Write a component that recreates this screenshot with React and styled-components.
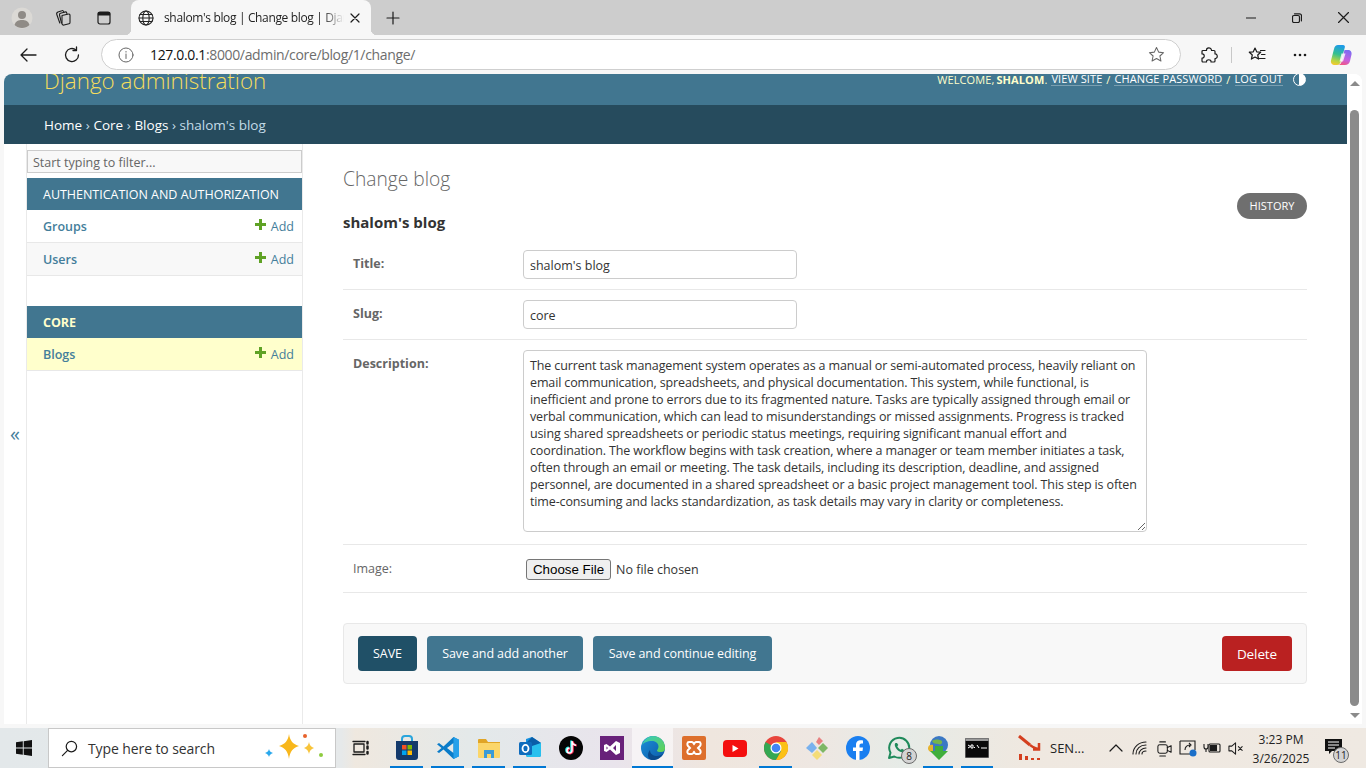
import React from 'react';
import styled, { createGlobalStyle } from 'styled-components';

const GlobalStyle = createGlobalStyle`
  html, body {
    margin: 0;
    padding: 0;
    height: 100%;
    overflow: hidden;
    background: #f7f7f7;
    font-family: "Open Sans", "Noto Sans", sans-serif;
  }
  * { box-sizing: border-box; }
`;

const Screen = styled.div`
  width: 1366px;
  height: 768px;
  display: flex;
  flex-direction: column;
  overflow: hidden;
  background: #f7f7f7;
`;

/* browser chrome */
const TabStrip = styled.div`
  height: 35px;
  flex: none;
  background: #cdcdcd;
  display: flex;
  align-items: center;
  color: #1c1c1c;
`;

const StripButton = styled.div`
  width: ${(p) => p.$w || 41}px;
  height: 35px;
  flex: none;
  display: flex;
  align-items: center;
  justify-content: center;
`;

const StripGap = styled.div`
  width: 6px;
  flex: none;
`;

const Tab = styled.div`
  position: relative;
  width: 240px;
  height: 35px;
  flex: none;
  background: #f7f7f7;
  border-radius: 8px 8px 0 0;
  display: flex;
  align-items: center;
  padding: 0 11px 0 7px;
  gap: 10px;

  &::before, &::after {
    content: '';
    position: absolute;
    bottom: 0;
    width: 6px;
    height: 6px;
  }
  &::before {
    left: -6px;
    background: radial-gradient(circle at 0 0, transparent 6px, #f7f7f7 6.5px);
  }
  &::after {
    right: -6px;
    background: radial-gradient(circle at 100% 0, transparent 6px, #f7f7f7 6.5px);
  }
`;

const TabTitle = styled.span`
  flex: 1;
  margin-right: -4px;
  overflow: hidden;
  white-space: nowrap;
  font-size: 12px;
  letter-spacing: -0.35px;
  color: #222;
  -webkit-mask-image: linear-gradient(to right, #000 88%, transparent 100%);
  mask-image: linear-gradient(to right, #000 88%, transparent 100%);
`;

const StripSpacer = styled.div`
  flex: 1;
`;

const AddressRow = styled.div`
  height: 39px;
  flex: none;
  background: #f7f7f7;
  display: flex;
  align-items: center;
  padding-left: 3px;
`;

const ToolButton = styled.div`
  width: ${(p) => p.$w || 44}px;
  height: 32px;
  flex: none;
  display: flex;
  align-items: center;
  justify-content: center;
`;

const AddressBar = styled.div`
  width: 1080px;
  height: 31px;
  margin: 0 6px 0 10px;
  flex: none;
  background: #fff;
  border: 1px solid #cfcfcf;
  border-radius: 16px;
  display: flex;
  align-items: center;
  padding: 0 15px 0 16px;
  gap: 16px;
  font-size: 14px;
  letter-spacing: -0.35px;
`;

const Url = styled.div`
  flex: 1;
  color: #6d6d6d;
  white-space: nowrap;
  b {
    font-weight: 400;
    color: #111;
  }
`;

const ToolbarSeparator = styled.div`
  width: 1px;
  height: 16px;
  flex: none;
  background: #c8c8c8;
`;

/* viewport and scrollbar */
const Viewport = styled.div`
  height: 650px;
  flex: none;
  margin: 0 4px 4px;
  display: flex;
  background: #fff;
  border-radius: 8px 8px 0 0;
  overflow: hidden;
`;

const Page = styled.div`
  width: 1343px;
  flex: none;
  display: flex;
  flex-direction: column;
  overflow: hidden;
  color: #333;
  font-size: 13px;
`;

const Scrollbar = styled.div`
  width: 15px;
  flex: none;
  display: flex;
  flex-direction: column;
  align-items: center;
  background: #fff;
`;

const ScrollArrow = styled.div`
  width: 0;
  height: 0;
  flex: none;
  margin-top: 7px;
  border-left: 5px solid transparent;
  border-right: 5px solid transparent;
  ${(p) => (p.$down ? 'border-top: 5px solid #8b8b8b;' : 'border-bottom: 5px solid #8b8b8b;')}
`;

const ScrollThumb = styled.div`
  width: 9px;
  height: 596px;
  margin-top: 24px;
  flex: none;
  background: #8b8b8b;
  border-radius: 5px;
`;

/* django header */
const Header = styled.header`
  height: 31px;
  flex: none;
  background: #417690;
  display: flex;
  justify-content: space-between;
  padding: 0 41px 0 40px;
  overflow: hidden;
`;

const Branding = styled.div`
  margin-top: -9px;
  font-size: 22.4px;
  line-height: 32px;
  font-weight: 300;
  color: #f5dd5d;
`;

const UserTools = styled.div`
  margin-top: -3px;
  height: 16px;
  display: flex;
  align-items: center;
  gap: 4px;
  font-size: 11px;
  letter-spacing: 0.1px;
  text-transform: uppercase;
  color: #ffc;
  white-space: nowrap;

  b {
    font-weight: 700;
    margin-left: -1px;
  }
`;

const UserLink = styled.a`
  color: #fff;
  border-bottom: 1px solid rgba(255, 255, 255, 0.3);
  line-height: 13px;
`;

const ThemeToggle = styled.span`
  width: 13px;
  height: 13px;
  margin-left: 6px;
  flex: none;
  border-radius: 50%;
  border: 1.5px solid #fff;
  background: linear-gradient(to right, transparent 50%, #fff 50%);
`;

const Breadcrumbs = styled.div`
  height: 39px;
  flex: none;
  background: #264b5d;
  padding-left: 40px;
  display: flex;
  align-items: center;
  gap: 3.6px;
  font-size: 13.5px;
  color: #c4dce8;

  a {
    color: #fff;
  }
`;

const Body = styled.div`
  flex: 1;
  display: flex;
  min-height: 0;
`;

const NavToggle = styled.div`
  width: 23px;
  flex: none;
  border-right: 1px solid #eaeaea;
  display: flex;
  align-items: center;
  justify-content: center;
  padding-bottom: 2px;
  font-size: 20px;
  color: #447e9b;
`;

const Sidebar = styled.nav`
  width: 276px;
  flex: none;
  border-right: 1px solid #eaeaea;
  padding-top: 6px;
`;

const FilterInput = styled.input`
  display: block;
  width: 275px;
  height: 23px;
  padding: 3px 5px 2px;
  margin-bottom: 5px;
  background: #f8f8f8;
  border: 1px solid #ccc;
  font-family: inherit;
  font-size: 12.5px;
  outline: none;

  &::placeholder {
    color: #666;
    opacity: 1;
  }
`;

const AppModule = styled.div`
  margin-bottom: 30px;
`;

const Caption = styled.div`
  height: 32px;
  background: #417690;
  color: ${(p) => (p.$current ? '#ffc' : '#fff')};
  font-weight: ${(p) => (p.$current ? 700 : 400)};
  font-size: 12.5px;
  letter-spacing: -0.02px;
  padding-left: 16px;
  display: flex;
  align-items: center;
`;

const ModelRow = styled.div`
  height: 33px;
  background: ${(p) => p.$bg || '#fff'};
  border-bottom: 1px solid #e8e8e8;
  display: flex;
  align-items: center;
  justify-content: space-between;
  padding: 0 8px 0 16px;
  font-size: 12.5px;
  color: #447e9b;
`;

const ModelName = styled.a`
  font-weight: 600;
`;

const AddLink = styled.a`
  display: flex;
  align-items: center;
  gap: 5px;
`;

const PlusIcon = styled.span`
  width: 11px;
  height: 11px;
  margin-top: -4px;
  flex: none;
  background:
    linear-gradient(#5fa225, #5fa225) center / 11px 3px no-repeat,
    linear-gradient(#5fa225, #5fa225) center / 3px 11px no-repeat;
`;

const Content = styled.main`
  flex: 1;
  padding: 20px 40px 0;
  min-width: 0;
`;

const PageTitle = styled.h1`
  margin: 0;
  font-size: 19.2px;
  line-height: 30px;
  font-weight: 300;
  color: #666;
`;

const ToolsRow = styled.div`
  display: flex;
  justify-content: flex-end;
  margin-top: -1px;
  height: 26px;
`;

const HistoryLink = styled.a`
  width: 70px;
  height: 26px;
  padding-bottom: 1px;
  border-radius: 13px;
  background: #6f6f6f;
  color: #fff;
  font-size: 11px;
  text-transform: uppercase;
  display: flex;
  align-items: center;
  justify-content: center;
`;

const ObjectName = styled.h2`
  margin: -7px 0 8px;
  font-size: 15px;
  line-height: 20px;
  font-weight: 700;
  color: #333;
`;

const FormRow = styled.div`
  display: flex;
  padding: ${(p) => p.$pt || 10}px 10px ${(p) => p.$pb || 10}px;
  border-bottom: 1px solid #e8e8e8;
`;

const Label = styled.label`
  width: 170px;
  flex: none;
  font-size: 12.5px;
  line-height: 17px;
  color: #666;
  font-weight: ${(p) => (p.$plain ? 400 : 700)};
  padding-top: ${(p) => p.$top || 0}px;
`;

const TextInput = styled.input`
  width: 274px;
  height: 29px;
  padding: 4px 6px 2px;
  background: #fff;
  border: 1px solid #ccc;
  border-radius: 4px;
  font-family: inherit;
  font-size: 12.5px;
  color: #333;
  outline: none;
`;

const DescriptionArea = styled.textarea`
  display: block;
  width: 624px;
  height: 182px;
  padding: 6px;
  background: #fff;
  border: 1px solid #ccc;
  border-radius: 4px;
  font-family: inherit;
  font-size: 12.5px;
  line-height: 17px;
  letter-spacing: -0.13px;
  color: #333;
  white-space: pre;
  overflow: hidden;
  outline: none;
`;

const FileField = styled.div`
  display: flex;
  align-items: center;
  gap: 5px;
  margin-left: 3px;
  font-size: 12.5px;
  color: #333;
`;

const FileButton = styled.button`
  width: 85px;
  height: 21px;
  padding: 0;
  background: #efefef;
  border: 1px solid #767676;
  border-radius: 3px;
  font-family: "Liberation Sans", sans-serif;
  font-size: 13.33px;
  color: #000;
`;

const SubmitRow = styled.div`
  margin-top: 30px;
  height: 61px;
  background: #f8f8f8;
  border: 1px solid #e8e8e8;
  border-radius: 4px;
  display: flex;
  align-items: center;
  gap: 10px;
  padding: 0 14px;
`;

const ActionButton = styled.button`
  height: 35px;
  width: ${(p) => p.$w}px;
  padding: 0;
  flex: none;
  border: none;
  border-radius: 4px;
  background: ${(p) => p.$bg || '#417690'};
  color: #fff;
  font-family: inherit;
  font-size: ${(p) => p.$size || 12.5}px;
  letter-spacing: -0.1px;
  ${(p) => p.$right && 'margin-left: auto;'}
`;

/* windows taskbar */
const Taskbar = styled.div`
  height: 40px;
  flex: none;
  display: flex;
  align-items: stretch;
  background: linear-gradient(
    to right,
    #e3e8ea 0,
    #e6e9ea 25%,
    #efe8df 26%,
    #e3e9ea 35%,
    #e9e4ec 45%,
    #efe6de 52%,
    #eee7e2 60%,
    #e6ebe7 66%,
    #efe8e0 75%,
    #efe9e2 100%
  );
`;

const StartButton = styled.div`
  width: 48px;
  flex: none;
  display: flex;
  align-items: center;
  justify-content: center;
`;

const SearchBox = styled.div`
  width: 288px;
  flex: none;
  background: #fff;
  border: 1px solid #c8c8c8;
  display: flex;
  align-items: center;
  padding: 0 10px 0 12px;
  gap: 10px;
  font-size: 14px;
  letter-spacing: -0.1px;
  color: #333;
`;

const SearchText = styled.span`
  flex: 1;
  white-space: nowrap;
`;

const TaskView = styled.div`
  width: 50px;
  flex: none;
  display: flex;
  align-items: center;
  justify-content: center;
`;

const TaskSlot = styled.div`
  position: relative;
  width: ${(p) => p.$w || 41}px;
  flex: none;
  display: flex;
  align-items: center;
  justify-content: center;
  background: ${(p) => (p.$active ? 'rgba(255,255,255,.55)' : 'transparent')};

  &::after {
    content: '';
    display: ${(p) => (p.$open ? 'block' : 'none')};
    position: absolute;
    bottom: 0;
    left: ${(p) => (p.$active ? 0 : 4)}px;
    right: ${(p) => (p.$active ? 0 : 4)}px;
    height: 2px;
    background: #0078d4;
  }
`;

const CountBadge = styled.span`
  position: absolute;
  right: ${(p) => p.$r}px;
  bottom: ${(p) => p.$b}px;
  width: 16px;
  height: 16px;
  border-radius: 50%;
  background: #d4d4d4;
  border: 1px solid #6a6a6a;
  color: #222;
  font-size: 10px;
  line-height: 14px;
  text-align: center;
`;

const TaskLabelApp = styled.div`
  width: 76px;
  flex: none;
  margin-left: 21px;
  display: flex;
  align-items: center;
  gap: 8px;
  font-size: 13px;
  color: #222;
`;

const Tray = styled.div`
  flex: 1;
  display: flex;
  align-items: center;
  justify-content: flex-end;
  padding-right: 16px;
`;

const TrayIcon = styled.div`
  width: ${(p) => p.$w || 24}px;
  height: 40px;
  flex: none;
  display: flex;
  align-items: center;
  justify-content: center;
`;

const Clock = styled.div`
  width: 70px;
  flex: none;
  margin-left: -2px;
  padding-top: 2px;
  font-size: 12px;
  line-height: 19px;
  text-align: center;
  color: #222;
`;

const Notice = styled.div`
  position: relative;
  width: 34px;
  height: 40px;
  padding-bottom: 4px;
  flex: none;
  display: flex;
  align-items: center;
  justify-content: center;
`;

/* drawings */
const Stroke = ({ size = 16, w = 16, h, children, sw = 1.2, color = '#1c1c1c' }) => (
  <svg width={size} height={h || size} viewBox={`0 0 ${w} ${h || w}`} fill="none" stroke={color} strokeWidth={sw} strokeLinecap="round" strokeLinejoin="round">
    {children}
  </svg>
);

const Avatar = () => (
  <svg width="22" height="22" viewBox="0 0 22 22">
    <circle cx="11" cy="11" r="10.5" fill="#dbd9d5" />
    <circle cx="11" cy="8" r="4" fill="#8f8b86" />
    <path d="M3.500 18c1-4 4-5 7.500-5s6.500 1 7.500 5c-2 2-4.500 3-7.500 3s-5.500-1-7.500-3z" fill="#8f8b86" />
  </svg>
);

const CollectionsGlyph = () => (
  <Stroke size={17} w={17} sw={1.1}>
    <path d="M7 6.500l6.500-1.500a1.200 1.200 0 0 1 1.500 1.200v7.300a1.300 1.300 0 0 1-1 1.300l-5 1.200a1.500 1.500 0 0 1-2-1.400z" />
    <path d="M12 4.800l-.3-1a1.300 1.300 0 0 0-1.600-.8L5.500 4.300A1.500 1.500 0 0 0 4.500 6l2 8" />
    <path d="M9 3.300l-.4-.9a1.300 1.300 0 0 0-1.700-.7L3 3A2 2 0 0 0 1.800 5.500l3 8.500" />
  </Stroke>
);

const GlobeGlyph = () => (
  <Stroke size={16} w={16} color="#222" sw={1.1}>
    <circle cx="8" cy="8" r="7" />
    <ellipse cx="8" cy="8" rx="3.200" ry="7" />
    <path d="M1 8h14M2 4.500h12M2 11.500h12" />
  </Stroke>
);

const CopilotLogo = () => (
  <svg width="22" height="22" viewBox="0 0 22 22">
    <defs>
      <linearGradient id="cpA" x1="0.5" y1="0" x2="0.3" y2="1">
        <stop offset="0" stopColor="#1d9be8" />
        <stop offset="0.45" stopColor="#35c08f" />
        <stop offset="0.8" stopColor="#b9d542" />
        <stop offset="1" stopColor="#f6c92f" />
      </linearGradient>
      <linearGradient id="cpB" x1="0.6" y1="0" x2="0.3" y2="1">
        <stop offset="0" stopColor="#7b6cf2" />
        <stop offset="0.6" stopColor="#c560e0" />
        <stop offset="1" stopColor="#f2577f" />
      </linearGradient>
    </defs>
    <path d="M8 1h5c1.500 0 2.200 1 1.800 2.500L11 17c-.6 2.200-1.800 4-4 4H5C2 21 .5 19 1 16.500L4 5c.5-2.500 2-4 4-4z" fill="url(#cpA)" />
    <path d="M14.500 6h3.500C20.500 6 22 8 21.500 10.500L20 17c-.6 2.500-2.500 4-5 4H8c2 0 3-1.500 3.600-3.500z" fill="url(#cpB)" />
    <path d="M11.500 9.500h4l-2.500 8h-3.500z" fill="#fff" opacity=".8" />
  </svg>
);

const WindowsLogo = () => (
  <svg width="16" height="16" viewBox="0 0 16 16" fill="#111">
    <path d="M0 2.300 6.800 1.300V7.500H0zM7.700 1.200 16 0V7.500H7.700zM0 8.500H6.800V14.700L0 13.700zM7.700 8.500H16V16L7.700 14.800z" />
  </svg>
);

const Sparkles = () => (
  <svg width="62" height="30" viewBox="0 0 62 30">
    <path d="M26 1c1 7 4 10 10 12-6 2-9 5-10 13-1-8-4-11-10-13 6-2 9-5 10-12z" fill="#f8b71c" />
    <path d="M46 9c.500 3 2 5 5 6-3 1-4.500 3-5 6-.500-3-2-5-5-6 3-1 4.500-3 5-6z" fill="#f8c43a" />
    <path d="M6 16c.400 2 1.500 3 4 4-2.500 1-3.600 2-4 4-.400-2-1.500-3-4-4 2.500-1 3.600-2 4-4z" fill="#2aa8ec" />
    <circle cx="42" cy="3" r="2" fill="#e8622c" />
    <circle cx="58" cy="22" r="2" fill="#8ecb3f" />
  </svg>
);

const StoreIcon = () => (
  <svg width="24" height="26" viewBox="0 0 24 26">
    <path d="M7 7V4a3 3 0 0 1 3-3h4a3 3 0 0 1 3 3v3" fill="none" stroke="#2aa5dc" strokeWidth="2" />
    <path d="M1 6h22v16a3 3 0 0 1-3 3H4a3 3 0 0 1-3-3z" fill="#143a6b" />
    <rect x="7" y="10" width="4.500" height="4.500" fill="#f25022" />
    <rect x="12.500" y="10" width="4.500" height="4.500" fill="#7fba00" />
    <rect x="7" y="15.500" width="4.500" height="4.500" fill="#00a4ef" />
    <rect x="12.500" y="15.500" width="4.500" height="4.500" fill="#ffb900" />
  </svg>
);

const VsCodeIcon = () => (
  <svg width="24" height="24" viewBox="0 0 24 24">
    <path d="M17.500 1 23 3.700v16.600L17.500 23 7.500 13.500 3 17 1 15.800 5.500 12 1 8.200 3 7l4.500 3.500z" fill="#0a7cc9" />
    <path d="M17.500 7 11 12l6.500 5z" fill="#e3e9ea" />
    <path d="M17.500 1 23 3.700v16.600L17.500 23z" fill="#25a0ea" />
  </svg>
);

const FolderIcon = () => (
  <svg width="24" height="22" viewBox="0 0 24 22">
    <path d="M1 3a1 1 0 0 1 1-1h7l2 3h12v4H1z" fill="#e0a526" />
    <path d="M1 6h22v14a1 1 0 0 1-1 1H2a1 1 0 0 1-1-1z" fill="#fbd66a" />
    <path d="M7 13h10v8h-3v-4h-4v4H7z" fill="#3a9bd8" />
  </svg>
);

const OutlookIcon = () => (
  <svg width="24" height="24" viewBox="0 0 24 24">
    <path d="M8 3l6-2 9 6v12a2 2 0 0 1-2 2H10a2 2 0 0 1-2-2z" fill="#1490df" />
    <path d="M14 1l9 6-9 5-6-5z" fill="#0a5ea8" />
    <path d="M8 12l15-5v12a2 2 0 0 1-2 2H10a2 2 0 0 1-2-2z" fill="#28c0ee" />
    <rect x="1" y="6" width="13" height="13" rx="1.500" fill="#0f6cbd" />
    <ellipse cx="7.500" cy="12.500" rx="3" ry="3.600" fill="none" stroke="#fff" strokeWidth="1.800" />
  </svg>
);

const TikTokIcon = () => (
  <svg width="24" height="24" viewBox="0 0 24 24">
    <circle cx="12" cy="12" r="12" fill="#050505" />
    <path d="M13 5v9.500a2.500 2.500 0 1 1-2.500-2.500M13 5c.3 2.500 2 4 4 4.200" fill="none" stroke="#25f4ee" strokeWidth="2" transform="translate(-.8 -.4)" />
    <path d="M13 5v9.500a2.500 2.500 0 1 1-2.500-2.500M13 5c.3 2.500 2 4 4 4.200" fill="none" stroke="#fe2c55" strokeWidth="2" transform="translate(.8 .4)" />
    <path d="M13 5v9.500a2.500 2.500 0 1 1-2.500-2.500M13 5c.3 2.500 2 4 4 4.200" fill="none" stroke="#fff" strokeWidth="1.500" />
  </svg>
);

const VisualStudioIcon = () => (
  <svg width="24" height="24" viewBox="0 0 24 24">
    <rect width="24" height="24" fill="#68217a" />
    <path d="M16 5l4 2v10l-4 2-6-5.500L6.500 16 4 15V9l2.500-1L10 10.500zM16 9l-3 3 3 3zM6.500 10.500v3L8 12z" fill="#fff" fillRule="evenodd" />
  </svg>
);

const EdgeIcon = () => (
  <svg width="24" height="24" viewBox="0 0 24 24">
    <defs>
      <linearGradient id="edA" x1="0" y1="0" x2="1" y2="1">
        <stop offset="0" stopColor="#37c9c0" />
        <stop offset="1" stopColor="#62d24e" />
      </linearGradient>
      <linearGradient id="edB" x1="0" y1="0" x2="1" y2="1">
        <stop offset="0" stopColor="#1c8fd8" />
        <stop offset="1" stopColor="#0c5aa8" />
      </linearGradient>
    </defs>
    <circle cx="12" cy="12" r="12" fill="url(#edB)" />
    <path d="M1 9C3 3.500 7 0 12 0c7 0 12 5 12 12 0 2-1 4-4 4-2.500 0-4-.5-4-1.500 0-.7 1.500-1.500 1.500-4C17.500 7.500 15 5 11 5 6 5 2.500 7 1 9z" fill="url(#edA)" />
    <path d="M9 14c0 4 3.500 6 7 6 2.500 0 4.500-1 6-2.500-2 4-6 6.500-10 6.500-3 0-5-2-5-5 0-2 1-4 2-5z" fill="#0a4a8c" />
  </svg>
);

const XamppIcon = () => (
  <svg width="24" height="24" viewBox="0 0 24 24">
    <rect width="24" height="24" rx="2" fill="#dd6f2c" />
    <path d="M7 6h3c1 0 1.500 1.500 2 2 .5-.5 1-2 2-2h3c2 0 2 3 1 4l-2 2 2 2c1 1 1 4-1 4h-3c-1 0-1.500-1.500-2-2-.5.5-1 2-2 2H7c-2 0-2-3-1-4l2-2-2-2C5 9 5 6 7 6z" fill="none" stroke="#fff" strokeWidth="2" />
  </svg>
);

const YouTubeIcon = () => (
  <svg width="24" height="17" viewBox="0 0 24 17">
    <rect width="24" height="17" rx="4" fill="#f40f0f" />
    <path d="M9.500 5v7l6-3.500z" fill="#fff" />
  </svg>
);

const ChromeIcon = () => (
  <svg width="24" height="24" viewBox="0 0 24 24">
    <circle cx="12" cy="12" r="12" fill="#e8453c" />
    <path d="M12 12 1.600 6A12 12 0 0 0 12 24l5.200-9z" fill="#34a853" />
    <path d="M12 6h10.400A12 12 0 0 1 12 24l5.200-9z" fill="#fbc116" />
    <circle cx="12" cy="12" r="5.500" fill="#fff" />
    <circle cx="12" cy="12" r="4.300" fill="#4285f4" />
  </svg>
);

const GitAppIcon = () => (
  <svg width="24" height="24" viewBox="0 0 24 24">
    <path d="M7 6l5 6-5 5-6-5z" fill="#79b1ee" />
    <path d="M14 1l4 4-4 4-3-3z" fill="#e88080" />
    <path d="M18 7l5 5-5 5-5-5z" fill="#7db765" />
    <path d="M12 14l5 5-5 5-5-5z" fill="#f4dc78" />
  </svg>
);

const FacebookIcon = () => (
  <svg width="24" height="24" viewBox="0 0 24 24">
    <circle cx="12" cy="12" r="12" fill="#1a7ff0" />
    <path d="M13.500 24v-9h3l.5-3.500h-3.500V9.500c0-1 .5-2 2-2H17V4.500c-3.500-.7-7 0-7 4.500v2.500H7V15h3v9z" fill="#fff" />
  </svg>
);

const WhatsAppIcon = () => (
  <svg width="24" height="24" viewBox="0 0 24 24">
    <path d="M2 22l1.500-5.300A10 10 0 1 1 7.300 20.500z" fill="none" stroke="#1f8a5b" strokeWidth="2" strokeLinejoin="round" />
    <path d="M8.500 7c-1 .8-1 2.500 0 4.300 1.200 2.200 3.500 4.500 6 5 1.500.2 2.800-.6 3-2l-2.500-1.500-1.200 1c-1.500-.6-3-2.200-3.500-3.500l1-1.200L10 7z" fill="#1f8a5b" />
  </svg>
);

const IdmIcon = () => (
  <svg width="24" height="24" viewBox="0 0 24 24">
    <circle cx="13" cy="9" r="9" fill="#3b78c4" />
    <path d="M6 5c3-2 7-2 10 0 1 3-2 4-4 3S8 9 6 5z" fill="#75b54a" />
    <path d="M2 12c0-3 3-4 5-3v7C4 16 2 15 2 12z" fill="#e6b32e" />
    <path d="M9 10h8v5h5l-9 9-9-9h5z" fill="#3fae3c" />
  </svg>
);

const CmdIcon = () => (
  <svg width="24" height="20" viewBox="0 0 24 20">
    <rect width="24" height="20" fill="#0a0a0a" stroke="#9a9a9a" strokeWidth="1" />
    <rect x=".5" y=".5" width="23" height="2.500" fill="#9a9a9a" />
    <path d="M3 7l2.500 1.500L3 10M6 7h2v3H6zM9 9.500h1M12 7l2 3M16 10h6" stroke="#fff" strokeWidth="1" fill="none" />
  </svg>
);

const SenIcon = () => (
  <svg width="24" height="26" viewBox="0 0 24 26" fill="#d43f1f">
    <rect x="1" y="19" width="3" height="6" />
    <rect x="7" y="21" width="3" height="4" />
    <rect x="13" y="23" width="3" height="2" />
    <rect x="19" y="23" width="3" height="2" />
    <path d="M1 1l11 9" stroke="#d43f1f" strokeWidth="3" fill="none" />
    <path d="M12 10c4 3 6 4 9 4M21 8v6.500h-6" stroke="#d43f1f" strokeWidth="2.500" fill="none" />
  </svg>
);

const LINES = [
  'The current task management system operates as a manual or semi-automated process, heavily reliant on',
  'email communication, spreadsheets, and physical documentation. This system, while functional, is',
  'inefficient and prone to errors due to its fragmented nature. Tasks are typically assigned through email or',
  'verbal communication, which can lead to misunderstandings or missed assignments. Progress is tracked',
  'using shared spreadsheets or periodic status meetings, requiring significant manual effort and',
  'coordination. The workflow begins with task creation, where a manager or team member initiates a task,',
  'often through an email or meeting. The task details, including its description, deadline, and assigned',
  'personnel, are documented in a shared spreadsheet or a basic project management tool. This step is often',
  'time-consuming and lacks standardization, as task details may vary in clarity or completeness.',
];

const TASK_APPS = [
  { key: 'store', icon: <StoreIcon />, open: true },
  { key: 'code', icon: <VsCodeIcon />, open: true },
  { key: 'folder', icon: <FolderIcon />, open: true },
  { key: 'outlook', icon: <OutlookIcon />, open: true },
  { key: 'tiktok', icon: <TikTokIcon /> },
  { key: 'vs', icon: <VisualStudioIcon /> },
  { key: 'edge', icon: <EdgeIcon />, open: true, active: true },
  { key: 'xampp', icon: <XamppIcon /> },
  { key: 'youtube', icon: <YouTubeIcon /> },
  { key: 'chrome', icon: <ChromeIcon />, open: true },
  { key: 'git', icon: <GitAppIcon /> },
  { key: 'facebook', icon: <FacebookIcon /> },
  { key: 'whatsapp', icon: <WhatsAppIcon />, badge: '8' },
  { key: 'idm', icon: <IdmIcon />, open: true, w: 38 },
  { key: 'cmd', icon: <CmdIcon />, open: true, w: 40 },
];

const App = () => {
  return (
    <Screen>
      <GlobalStyle />
      <TabStrip>
        <StripButton $w={44}><Avatar /></StripButton>
        <StripButton $w={38}><CollectionsGlyph /></StripButton>
        <StripButton $w={43}>
          <Stroke size={16} w={16}>
            <rect x="2" y="2" width="12" height="12" rx="2" />
            <path d="M2.500 2.500h11v2.500h-11z" fill="#1c1c1c" />
          </Stroke>
        </StripButton>
        <StripGap />
        <Tab>
          <GlobeGlyph />
          <TabTitle>shalom's blog | Change blog | Django site admin</TabTitle>
          <Stroke size={10} w={10}><path d="M1 1l8 8M9 1l-8 8" /></Stroke>
        </Tab>
        <StripButton $w={44}>
          <Stroke size={14} w={14}><path d="M7 1v12M1 7h12" /></Stroke>
        </StripButton>
        <StripSpacer />
        <StripButton $w={46}><Stroke size={10} w={10}><path d="M0 5h10" /></Stroke></StripButton>
        <StripButton $w={46}>
          <Stroke size={10} w={10}>
            <rect x=".5" y="2.500" width="7" height="7" rx="1.500" />
            <path d="M2.500 .8h5a2 2 0 0 1 2 2v5" />
          </Stroke>
        </StripButton>
        <StripButton $w={46}><Stroke size={11} w={11}><path d="M.5.5l10 10M10.500.5l-10 10" /></Stroke></StripButton>
      </TabStrip>

      <AddressRow>
        <ToolButton $w={50}>
          <Stroke size={18} w={18} sw={1.3}><path d="M17 9H2M8 3L2 9l6 6" /></Stroke>
        </ToolButton>
        <ToolButton $w={38}>
          <Stroke size={18} w={18} sw={1.3}>
            <path d="M15.500 9A6.500 6.500 0 1 1 13 3.900" />
            <path d="M13.500 1v3.500H10" />
          </Stroke>
        </ToolButton>
        <AddressBar>
          <Stroke size={16} w={16} color="#666" sw={1}>
            <circle cx="8" cy="8" r="7" />
            <path d="M8 7v4.500M8 4.500v.6" />
          </Stroke>
          <Url><b>127.0.0.1</b>:8000/admin/core/blog/1/change/</Url>
          <Stroke size={17} w={18} color="#666" sw={1.1}>
            <path d="M9 1.500l2.300 5 5.200.6-3.900 3.500 1.100 5.300L9 13.200l-4.700 2.700 1.100-5.300L1.500 7.100l5.200-.6z" />
          </Stroke>
        </AddressBar>
        <ToolButton $w={44}>
          <Stroke size={18} w={18} sw={1.2}>
            <path d="M6.500 4C6.500 1.500 11 1 11.500 4v.5H14a1 1 0 0 1 1 1V8c3-.5 3 5 0 4.500V15a1 1 0 0 1-1 1h-3c.5-3-5-3-4.500 0H3a1 1 0 0 1-1-1v-3c3 .5 3-4.500 0-4V5.500a1 1 0 0 1 1-1h3.500z" />
          </Stroke>
        </ToolButton>
        <ToolbarSeparator />
        <ToolButton $w={49}>
          <Stroke size={18} w={18} sw={1.2}>
            <path d="M7 2l1.700 3.800 4 .4-3 2.800.9 4.100L7 11l-3.600 2.100.9-4.100-3-2.800 4-.4zM12.500 4.500H17M13.500 8.500H17M11.500 12.500H17" />
          </Stroke>
        </ToolButton>
        <ToolButton $w={37}>
          <svg width="14" height="4" viewBox="0 0 14 4" fill="#1c1c1c">
            <circle cx="2" cy="2" r="1.300" /><circle cx="7" cy="2" r="1.300" /><circle cx="12" cy="2" r="1.300" />
          </svg>
        </ToolButton>
        <ToolButton $w={46}><CopilotLogo /></ToolButton>
      </AddressRow>

      <Viewport>
        <Page>
          <Header>
            <Branding>Django administration</Branding>
            <UserTools>
              <span>Welcome, <b>shalom</b>.</span>
              <UserLink>View site</UserLink> /
              <UserLink>Change password</UserLink> /
              <UserLink>Log out</UserLink>
              <ThemeToggle />
            </UserTools>
          </Header>
          <Breadcrumbs>
            <a>Home</a> › <a>Core</a> › <a>Blogs</a> › shalom's blog
          </Breadcrumbs>
          <Body>
            <NavToggle>«</NavToggle>
            <Sidebar>
              <FilterInput placeholder="Start typing to filter..." />
              <AppModule>
                <Caption>AUTHENTICATION AND AUTHORIZATION</Caption>
                <ModelRow>
                  <ModelName>Groups</ModelName>
                  <AddLink><PlusIcon />Add</AddLink>
                </ModelRow>
                <ModelRow $bg="#f8f8f8">
                  <ModelName>Users</ModelName>
                  <AddLink><PlusIcon />Add</AddLink>
                </ModelRow>
              </AppModule>
              <AppModule>
                <Caption $current>CORE</Caption>
                <ModelRow $bg="#ffc">
                  <ModelName>Blogs</ModelName>
                  <AddLink><PlusIcon />Add</AddLink>
                </ModelRow>
              </AppModule>
            </Sidebar>
            <Content>
              <PageTitle>Change blog</PageTitle>
              <ToolsRow><HistoryLink>History</HistoryLink></ToolsRow>
              <ObjectName>shalom's blog</ObjectName>
              <FormRow>
                <Label $top={5}>Title:</Label>
                <TextInput defaultValue="shalom's blog" />
              </FormRow>
              <FormRow>
                <Label $top={5}>Slug:</Label>
                <TextInput defaultValue="core" />
              </FormRow>
              <FormRow $pb={12}>
                <Label $top={5}>Description:</Label>
                <DescriptionArea defaultValue={LINES.join('\n')} />
              </FormRow>
              <FormRow $pt={14} $pb={12}>
                <Label $plain $top={1}>Image:</Label>
                <FileField>
                  <FileButton>Choose File</FileButton>
                  No file chosen
                </FileField>
              </FormRow>
              <SubmitRow>
                <ActionButton $w={59} $bg="#205067">SAVE</ActionButton>
                <ActionButton $w={156}>Save and add another</ActionButton>
                <ActionButton $w={179}>Save and continue editing</ActionButton>
                <ActionButton $w={70} $bg="#ba2121" $size={13.5} $right>Delete</ActionButton>
              </SubmitRow>
            </Content>
          </Body>
        </Page>
        <Scrollbar>
          <ScrollArrow />
          <ScrollThumb />
          <ScrollArrow $down />
        </Scrollbar>
      </Viewport>

      <Taskbar>
        <StartButton><WindowsLogo /></StartButton>
        <SearchBox>
          <Stroke size={17} w={18} sw={1.3}>
            <circle cx="11" cy="7" r="5.500" />
            <path d="M7 11l-5.500 5.500" />
          </Stroke>
          <SearchText>Type here to search</SearchText>
          <Sparkles />
        </SearchBox>
        <TaskView>
          <Stroke size={18} w={18} sw={1.3}>
            <rect x="2" y="5" width="10" height="8" />
            <path d="M1 2.500h12M1 15.500h12" />
            <path d="M15.500 3v1.500M15.500 7.500v2M15.500 13v1.500" strokeWidth="2.500" />
          </Stroke>
        </TaskView>
        {TASK_APPS.map((app) => (
          <TaskSlot key={app.key} $w={app.w} $open={app.open} $active={app.active}>
            {app.icon}
            {app.badge && <CountBadge $r={2} $b={4}>{app.badge}</CountBadge>}
          </TaskSlot>
        ))}
        <TaskLabelApp>
          <SenIcon />
          SEN...
        </TaskLabelApp>
        <Tray>
          <TrayIcon>
            <Stroke size={14} w={14} sw={1.2}><path d="M1 10l6-6 6 6" /></Stroke>
          </TrayIcon>
          <TrayIcon>
            <Stroke size={16} w={16} sw={1.1}>
              <path d="M1 14C1 7 7 2 14 2M4 14c0-5 4-9 10-9M7 14c0-3 3-6 7-6M10 14c0-2 2-3 4-3" />
            </Stroke>
          </TrayIcon>
          <TrayIcon>
            <Stroke size={17} w={18} sw={1.1}>
              <rect x="2" y="5" width="10" height="9" rx="2" />
              <path d="M12 8l4-2v7l-4-2M4 2h6M4 17h6" />
            </Stroke>
          </TrayIcon>
          <TrayIcon>
            <svg width="18" height="18" viewBox="0 0 18 18" fill="none" stroke="#1c1c1c" strokeWidth="1.100">
              <path d="M1 2h15v9M1 2v13h10" />
              <path d="M6 11c0-3 2-5 5-5M10 4l2 2-2 2" />
              <circle cx="14" cy="14" r="3.500" fill="#1a6fc9" stroke="none" />
            </svg>
          </TrayIcon>
          <TrayIcon>
            <svg width="18" height="14" viewBox="0 0 18 14" fill="none" stroke="#1c1c1c" strokeWidth="1.100">
              <rect x="6" y="3" width="11" height="8" rx="1" />
              <rect x="7.500" y="4.500" width="6" height="5" fill="#1c1c1c" />
              <path d="M1 3v3a2 2 0 0 0 4 0V3M3 8v3" />
            </svg>
          </TrayIcon>
          <TrayIcon>
            <Stroke size={17} w={18} sw={1.1}>
              <path d="M1 6.500h3L8 3v12l-4-3.500H1zM11 7l4 4M15 7l-4 4" />
            </Stroke>
          </TrayIcon>
          <Clock>3:23 PM<br />3/26/2025</Clock>
          <Notice>
            <svg width="17" height="15" viewBox="0 0 17 15">
              <path d="M0 0h17v12H7l-3 3v-3H0z" fill="#111" />
              <path d="M3 3h11M3 6h11M3 9h7" stroke="#fff" strokeWidth="1" />
            </svg>
            <CountBadge $r={1} $b={5}>11</CountBadge>
          </Notice>
        </Tray>
      </Taskbar>
    </Screen>
  );
};

export default App;
